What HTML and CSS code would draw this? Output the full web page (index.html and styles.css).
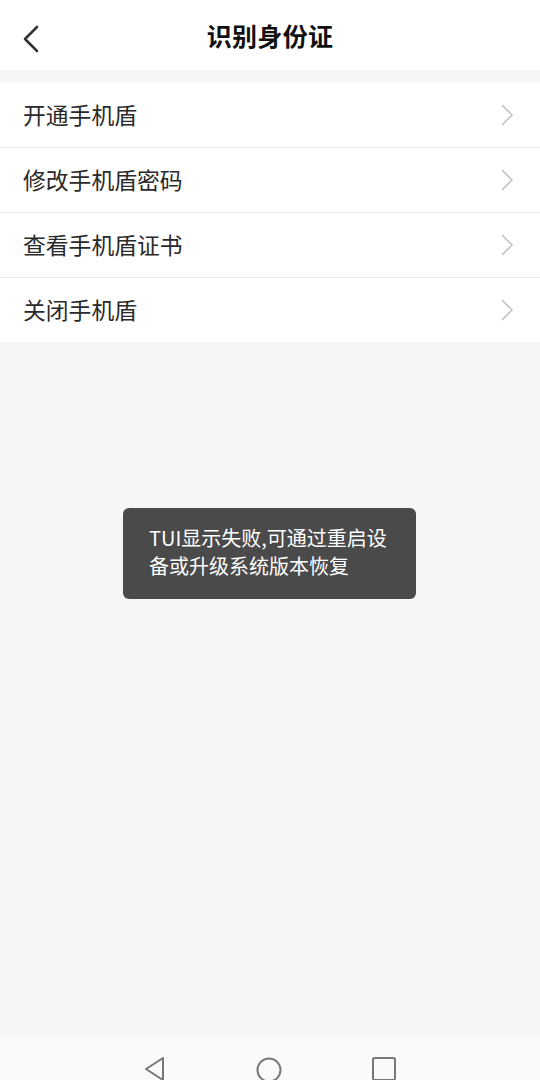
FILE: index.html
```html
<!DOCTYPE html>
<html lang="zh-CN">
<head>
<meta charset="utf-8">
<title>识别身份证</title>
<link rel="stylesheet" href="styles.css">
</head>
<body>
<div class="screen">
  <header class="topbar">
    <span class="back">
      <svg width="18" height="28" viewBox="0 0 18 28"><path d="M15 2 L3 14 L15 26" fill="none" stroke="#333" stroke-width="2.6" stroke-linecap="round" stroke-linejoin="round"/></svg>
    </span>
    <h1 class="title">识别身份证</h1>
  </header>
  <div class="list">
    <div class="row"><span class="label">开通手机盾</span><svg class="chev" width="14" height="22" viewBox="0 0 14 22"><path d="M2 1 L12 11 L2 21" fill="none" stroke="#c4c4c4" stroke-width="1.6"/></svg></div>
    <div class="row"><span class="label">修改手机盾密码</span><svg class="chev" width="14" height="22" viewBox="0 0 14 22"><path d="M2 1 L12 11 L2 21" fill="none" stroke="#c4c4c4" stroke-width="1.6"/></svg></div>
    <div class="row"><span class="label">查看手机盾证书</span><svg class="chev" width="14" height="22" viewBox="0 0 14 22"><path d="M2 1 L12 11 L2 21" fill="none" stroke="#c4c4c4" stroke-width="1.6"/></svg></div>
    <div class="row"><span class="label">关闭手机盾</span><svg class="chev" width="14" height="22" viewBox="0 0 14 22"><path d="M2 1 L12 11 L2 21" fill="none" stroke="#c4c4c4" stroke-width="1.6"/></svg></div>
  </div>
  <div class="content">
    <div class="toast">TUI显示失败,可通过重启设<br>备或升级系统版本恢复</div>
  </div>
  <nav class="navbar">
    <svg width="24" height="26" viewBox="0 0 24 26"><path d="M20 2 L3 13 L20 24 Z" fill="none" stroke="#777" stroke-width="2" stroke-linejoin="round"/></svg>
    <svg width="28" height="28" viewBox="0 0 28 28"><circle cx="14" cy="14" r="11.5" fill="none" stroke="#777" stroke-width="2"/></svg>
    <svg width="26" height="26" viewBox="0 0 26 26"><rect x="2" y="2" width="22" height="22" rx="1.5" fill="none" stroke="#777" stroke-width="2"/></svg>
  </nav>
</div>
</body>
</html>
```

FILE: styles.css
```css
* { box-sizing: border-box; }
html, body { margin: 0; padding: 0; }
body {
  width: 540px;
  height: 1080px;
  overflow: hidden;
  background: #f6f6f6;
  font-family: "Noto Sans CJK SC", "Noto Sans", sans-serif;
  color: #222;
}
.screen {
  height: 1080px;
  display: flex;
  flex-direction: column;
}
.topbar {
  height: 70px;
  background: #fff;
  display: flex;
  align-items: center;
  justify-content: center;
  position: relative;
  flex-shrink: 0;
}
.back {
  position: absolute;
  left: 22px;
  top: 25px;
  display: flex;
}
.title {
  margin: 0;
  font-size: 25px;
  font-weight: 700;
  color: #111;
  letter-spacing: 0.3px;
  line-height: 1;
}
.list {
  margin-top: 13px;
  background: #fff;
  flex-shrink: 0;
}
.row {
  height: 65px;
  display: flex;
  align-items: center;
  justify-content: space-between;
  padding: 0 26px 0 23px;
  border-top: 1px solid #ebebeb;
}
.row:first-child {
  height: 64px;
  border-top: none;
}
.label {
  font-size: 22.8px;
  color: #2a2a2a;
  line-height: 1;
}
.chev { display: block; margin-top: -1px; }
.content {
  flex: 1;
  display: flex;
  flex-direction: column;
  align-items: flex-start;
  padding-top: 166px;
  padding-left: 123px;
}
.toast {
  width: 293px;
  height: 91px;
  background: #4a4a4a;
  border-radius: 6px;
  color: #fff;
  font-size: 20px;
  line-height: 28px;
  padding: 16px 20px 0 26px;
  white-space: nowrap;
}
.navbar {
  height: 45px;
  background: #fafafa;
  flex-shrink: 0;
  display: flex;
  justify-content: center;
  align-items: flex-start;
  gap: 88px;
  padding-top: 21px;
}
```
